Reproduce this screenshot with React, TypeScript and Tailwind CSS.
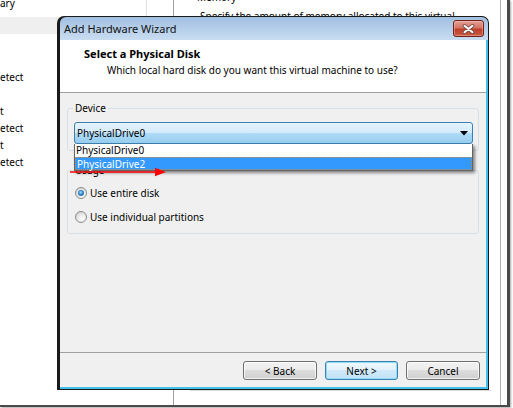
import React from "react";

function Radio({ checked }: { checked?: boolean }) {
  return (
    <span className="inline-flex w-[12px] h-[12px] shrink-0 items-center justify-center rounded-full border border-[#8a8b8c] bg-[radial-gradient(circle_at_65%_70%,#ffffff_0%,#eaeaea_45%,#c9c9c9_100%)]">
      {checked && (
        <span className="w-[6px] h-[6px] rounded-full bg-[radial-gradient(circle_at_45%_40%,#9fe0ff_0%,#3a8fd0_40%,#123f6c_100%)]" />
      )}
    </span>
  );
}

function Btn({ label, primary }: { label: string; primary?: boolean }) {
  return (
    <div
      className={
        primary
          ? "w-[73px] h-[19px] flex items-center justify-center rounded-[3px] border border-[#3c7fb1] bg-[linear-gradient(to_bottom,#eef7fd_0%,#e2f1fb_50%,#d0e9f9_50%,#c2e2f7_100%)] shadow-[inset_0_0_0_1px_#8fdcf7]"
          : "w-[74px] h-[19px] flex items-center justify-center rounded-[3px] border border-[#707070] bg-[linear-gradient(to_bottom,#f2f2f2_0%,#ebebeb_50%,#dddddd_50%,#cfcfcf_100%)] shadow-[inset_0_0_0_1px_rgba(255,255,255,0.75)]"
      }
    >
      <span className="leading-[14px]">{label}</span>
    </div>
  );
}

function ListRow({ children }: { children?: React.ReactNode }) {
  return <div className="h-[17px] flex items-center whitespace-nowrap">{children}</div>;
}

export default function App() {
  return (
    <div className="relative w-[513px] h-[408px] overflow-hidden bg-white text-black font-['Noto_Sans',sans-serif] text-[10px] leading-[14px]">
      {/* background settings window */}
      <div className="flex w-[510px] h-[407px] border-r-[3px] border-b-2 border-[#4a4a4a] shadow-[1px_1px_2px_rgba(0,0,0,0.35)]">
        <div className="w-[174px] shrink-0 border-r border-[#a0a0a0] flex flex-col">
          <div className="-mt-[4px] h-[21px] flex">
            <div className="w-[147px] border-r border-[#e2e2e2]">ary</div>
          </div>
          <div className="h-[17px] bg-[#efefef]" />
          <ListRow />
          <ListRow />
          <ListRow>etect</ListRow>
          <ListRow />
          <ListRow>t</ListRow>
          <ListRow>etect</ListRow>
          <ListRow>t</ListRow>
          <ListRow>etect</ListRow>
        </div>
        <div className="flex-1 flex flex-col">
          <div className="-mt-[10px] pl-[23px]">Memory</div>
          <div className="mt-[5px] pl-[26px] whitespace-nowrap">
            Specify the amount of memory allocated to this virtual
          </div>
          <div className="flex-1 ml-[16px] mr-[9px] mb-[14px] border-b border-[#dcdcdc]" />
        </div>
        <div className="w-[7px] border-l border-[#b4b4b4]" />
      </div>

      {/* Add Hardware Wizard dialog */}
      <div className="absolute left-[57px] top-[16px] w-[432px] h-[374px] rounded-t-[7px] bg-[#1a1a1a] pl-[3px] pr-px pt-px pb-px">
        <div className="h-full flex flex-col rounded-t-[6px] overflow-hidden">
          <div className="h-[23px] shrink-0 flex items-center justify-between pl-[4px] pr-[4px] bg-[linear-gradient(to_bottom,#a1bfe1,#c9ddf1)]">
            <span className="text-[11px] text-[#111]">Add Hardware Wizard</span>
            <div className="w-[31px] h-[17px] flex items-center justify-center rounded-[3px] border border-[#6e2118] bg-[linear-gradient(to_bottom,#e6a096_0%,#d47463_45%,#bf3f2c_55%,#c95a43_100%)] shadow-[inset_0_0_0_1px_rgba(255,210,200,0.4)]">
              <svg width="13" height="10" viewBox="0 0 13 10">
                <path d="M2.5 1.8 L10.5 8.2 M10.5 1.8 L2.5 8.2" stroke="#6b4a46" strokeWidth="3.6" strokeLinecap="round" />
                <path d="M2.5 1.8 L10.5 8.2 M10.5 1.8 L2.5 8.2" stroke="#ffffff" strokeWidth="2" strokeLinecap="round" />
              </svg>
            </div>
          </div>
          <div className="flex-1 flex flex-col border-r-2 border-b-2 border-[#43c0ec] bg-[#f0f0f0]">
            {/* header */}
            <div className="h-[53px] shrink-0 bg-white border-b border-[#a0a0a0] pl-[24px] pt-[7px]">
              <div className="text-[11px] font-bold">Select a Physical Disk</div>
              <div className="ml-[23px] mt-[2px]">Which local hard disk do you want this virtual machine to use?</div>
            </div>
            {/* body */}
            <div className="h-[259px] shrink-0 px-[7px] pt-[15px]">
              <div className="relative z-10 h-[43px] rounded-[3px] border border-[#d5dfe5] pt-[13px] pl-[6px] pr-[5px]">
                <span className="absolute left-[5px] top-[-8px] px-[2px] bg-[#f0f0f0]">Device</span>
                <div className="relative">
                  <div className="h-[22px] flex items-center justify-between rounded-[3px] border border-[#3c7fb1] bg-[linear-gradient(to_bottom,#e6f4fc_0%,#d2eafa_50%,#b0dcf6_50%,#96cdef_100%)] pl-[2px] pr-[4px]">
                    <span>PhysicalDrive0</span>
                    <svg width="8" height="5" viewBox="0 0 8 5">
                      <path d="M0 0 H8 L4 4.5 Z" fill="#000" />
                    </svg>
                  </div>
                  <div className="absolute left-0 right-0 top-full border-l border-r border-b border-[#646464] bg-white shadow-[2px_2px_3px_rgba(0,0,0,0.45)]">
                    <div className="h-[13px] leading-[13px] pl-px">PhysicalDrive0</div>
                    <div className="h-[13px] leading-[12px] pl-px bg-[#3399ff] text-white border border-dotted border-[#c8894a]">
                      PhysicalDrive2
                    </div>
                  </div>
                </div>
              </div>
              <div className="relative mt-[19px] h-[64px] rounded-[3px] border border-[#d5dfe5] pt-[15px] pl-[7px]">
                <span className="absolute left-[5px] top-[-8px] px-[2px] bg-[#f0f0f0]">Usage</span>
                <div className="flex items-center gap-[3px] h-[14px]">
                  <Radio checked />
                  <span>Use entire disk</span>
                </div>
                <div className="flex items-center gap-[3px] h-[14px] mt-[10px]">
                  <Radio />
                  <span>Use individual partitions</span>
                </div>
              </div>
            </div>
            {/* footer */}
            <div className="flex-1 border-t border-[#a0a0a0] flex justify-end items-start pt-[8px] pr-[6px] gap-[8px]">
              <Btn label="< Back" />
              <Btn label="Next >" primary />
              <Btn label="Cancel" />
            </div>
          </div>
        </div>
      </div>

      {/* red annotation arrow */}
      <svg className="absolute left-[68px] top-[166px] z-20" width="100" height="12" viewBox="0 0 100 12">
        <line x1="2" y1="6" x2="90" y2="6" stroke="#ff0000" strokeWidth="1.6" />
        <path d="M87 1.8 L98 6 L87 10.2 Z" fill="#ff0000" />
      </svg>
    </div>
  );
}
